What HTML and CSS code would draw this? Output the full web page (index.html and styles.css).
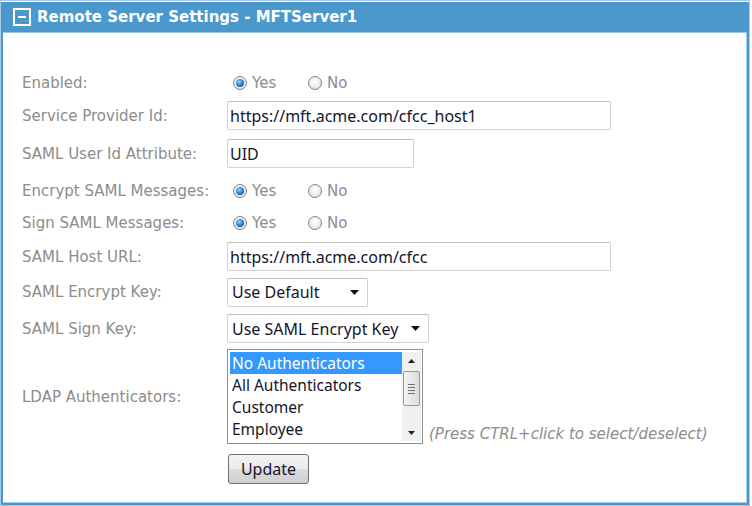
FILE: index.html
```html
<!DOCTYPE html>
<html lang="en">
<head>
    <meta charset="UTF-8">
    <title>Remote Server Settings</title>
    <link rel="stylesheet" href="styles.css">
</head>
<body>
    <div class="panel">
        <div class="panel-inner">
            <div class="panel-head">
                <span class="toggle"><span class="minus"></span></span>
                <span class="title">Remote Server Settings - MFTServer1</span>
            </div>
            <div class="panel-body">
                <div class="form">
                    <div class="row r1">
                        <label>Enabled:</label>
                        <div class="ctl">
                            <span class="radio on"></span><span class="opt">Yes</span>
                            <span class="radio"></span><span class="opt">No</span>
                        </div>
                    </div>
                    <div class="row r2">
                        <label>Service Provider Id:</label>
                        <div class="ctl"><input type="text" class="txt wide" value="https://mft.acme.com/cfcc_host1"></div>
                    </div>
                    <div class="row r3">
                        <label>SAML User Id Attribute:</label>
                        <div class="ctl"><input type="text" class="txt short" value="UID"></div>
                    </div>
                    <div class="row r4">
                        <label>Encrypt SAML Messages:</label>
                        <div class="ctl">
                            <span class="radio on"></span><span class="opt">Yes</span>
                            <span class="radio"></span><span class="opt">No</span>
                        </div>
                    </div>
                    <div class="row r5">
                        <label>Sign SAML Messages:</label>
                        <div class="ctl">
                            <span class="radio on"></span><span class="opt">Yes</span>
                            <span class="radio"></span><span class="opt">No</span>
                        </div>
                    </div>
                    <div class="row r6">
                        <label>SAML Host URL:</label>
                        <div class="ctl"><input type="text" class="txt wide" value="https://mft.acme.com/cfcc"></div>
                    </div>
                    <div class="row r7">
                        <label>SAML Encrypt Key:</label>
                        <div class="ctl">
                            <div class="select sel-a"><span>Use Default</span>
                                <svg width="9" height="5" viewBox="0 0 9 5"><path d="M0 0h9L4.5 5z" fill="#111"/></svg>
                            </div>
                        </div>
                    </div>
                    <div class="row r8">
                        <label>SAML Sign Key:</label>
                        <div class="ctl">
                            <div class="select sel-b"><span>Use SAML Encrypt Key</span>
                                <svg width="9" height="5" viewBox="0 0 9 5"><path d="M0 0h9L4.5 5z" fill="#111"/></svg>
                            </div>
                        </div>
                    </div>
                    <div class="row r9">
                        <label>LDAP Authenticators:</label>
                        <div class="ctl bottom">
                            <div class="listbox">
                                <ul class="items">
                                    <li class="sel">No Authenticators</li>
                                    <li>All Authenticators</li>
                                    <li>Customer</li>
                                    <li>Employee</li>
                                </ul>
                                <div class="scroll">
                                    <div class="arrow">
                                        <svg width="7" height="4" viewBox="0 0 7 4"><path d="M0 4h7L3.5 0z" fill="#222"/></svg>
                                    </div>
                                    <div class="thumb"><span></span><span></span><span></span><span></span></div>
                                    <div class="track"></div>
                                    <div class="arrow">
                                        <svg width="7" height="4" viewBox="0 0 7 4"><path d="M0 0h7L3.5 4z" fill="#222"/></svg>
                                    </div>
                                </div>
                            </div>
                            <span class="hint">(Press CTRL+click to select/deselect)</span>
                        </div>
                    </div>
                    <div class="row r10">
                        <label></label>
                        <div class="ctl"><button class="btn">Update</button></div>
                    </div>
                </div>
            </div>
        </div>
    </div>
</body>
</html>
```

FILE: styles.css
```css
*
{
  margin: 0;
  padding: 0;
  box-sizing: border-box;
}
body{
  background: #fff;
  font-family: "DejaVu Sans", Verdana, sans-serif;
}
.panel{
  width: 750px;
  height: 506px;
  border: 1px solid #a9cbe7;
  padding: 1px 0 0 0;
}
.panel-inner{
  height: 503px;
  border: 2px solid #4a98cb;
  border-top: 0;
  box-shadow: inset -1px -1px 0 #a9cbe7;
}
.panel-head{
  height: 31px;
  background: #4b99cc;
  border-bottom: 1px solid #9cc6e6;
  display: flex;
  align-items: center;
  padding-left: 10px;
  gap: 6px;
  color: #fff;
}
.toggle{
  width: 18px;
  height: 18px;
  border: 2px solid #fff;
  display: flex;
  align-items: center;
  justify-content: center;
}
.toggle .minus{
  width: 8px;
  height: 2px;
  background: #fff;
}
.title{
  font-weight: bold;
  font-size: 15px;
}
.panel-body{
  padding: 34px 0 0 19px;
}
.row{
  display: flex;
  align-items: center;
}
.row label{
  width: 205px;
  flex: none;
  color: #8c8c8c;
  font-size: 15px;
}
.ctl{
  display: flex;
  align-items: center;
}
.ctl.bottom{
  align-items: flex-end;
}
.r1{ height: 32px; }
.r2{ height: 33px; }
.r3{ height: 43px; }
.r4{ height: 32px; }
.r5{ height: 32px; }
.r6{ height: 35px; }
.r7{ height: 36px; }
.r8{ height: 37px; }
.r9{ height: 99px; }
.r10{ height: 38px; align-items: flex-end; }

.radio{
  width: 14px;
  height: 14px;
  border-radius: 50%;
  border: 1px solid #7f868c;
  background: radial-gradient(circle at 50% 40%, #fff 0, #e8e8e8 65%, #cacaca 100%);
  display: flex;
  align-items: center;
  justify-content: center;
  margin-left: 6px;
}
.radio.on::after{
  content: '';
  width: 8px;
  height: 8px;
  border-radius: 50%;
  background: radial-gradient(circle at 40% 35%, #9ad6ff 0, #2377c2 55%, #0c3d75 100%);
}
.opt{
  color: #8c8c8c;
  font-size: 15px;
  margin-left: 5px;
  width: 50px;
}
.txt{
  height: 29px;
  border: 1px solid #d2d2d2;
  border-top-color: #bdbdbd;
  border-radius: 2px;
  padding: 0 2px;
  font-family: "Noto Sans", sans-serif;
  font-size: 16px;
  color: #15152a;
  outline: none;
}
.txt.wide{ width: 384px; }
.txt.short{ width: 187px; }
.select{
  height: 29px;
  border: 1px solid #d2d2d2;
  border-top-color: #bdbdbd;
  border-radius: 2px;
  display: flex;
  align-items: center;
  justify-content: space-between;
  padding: 0 8px 0 4px;
  font-family: "Noto Sans", sans-serif;
  font-size: 16px;
  color: #15152a;
}
.sel-a{ width: 141px; }
.sel-b{ width: 202px; }
.listbox{
  width: 196px;
  height: 95px;
  border: 1px solid #8e8e8e;
  display: flex;
  padding: 2px 1px 2px 2px;
}
.items{
  list-style: none;
  flex: 1;
  font-family: "Noto Sans", sans-serif;
  font-size: 15.5px;
  color: #15152a;
}
.items li{
  height: 22px;
  line-height: 22px;
  padding-left: 2px;
}
.items li.sel{
  background: #3399ff;
  color: #fff;
}
.scroll{
  width: 19px;
  display: flex;
  flex-direction: column;
  background: #f0f0f0;
}
.scroll .arrow{
  height: 17px;
  display: flex;
  align-items: center;
  justify-content: center;
}
.scroll .thumb{
  height: 35px;
  margin: 2px 1px 0;
  border: 1px solid #9a9a9a;
  border-radius: 2px;
  background: linear-gradient(to right, #f4f4f4, #dcdcdc);
  display: flex;
  flex-direction: column;
  align-items: center;
  justify-content: center;
  gap: 2px;
}
.scroll .thumb span{
  width: 7px;
  height: 1px;
  background: #6e6e6e;
}
.scroll .track{
  flex: 1;
}
.hint{
  font-size: 15px;
  font-style: italic;
  color: #8c8c8c;
  margin: 0 0 1px 6px;
}
.btn{
  width: 81px;
  height: 30px;
  margin-left: 1px;
  border: 1px solid #707070;
  border-radius: 3px;
  background: linear-gradient(#f3f3f3 0, #ebebeb 50%, #dddddd 51%, #cfcfcf 100%);
  font-family: "Noto Sans", sans-serif;
  font-size: 16px;
  color: #15152a;
}
```
